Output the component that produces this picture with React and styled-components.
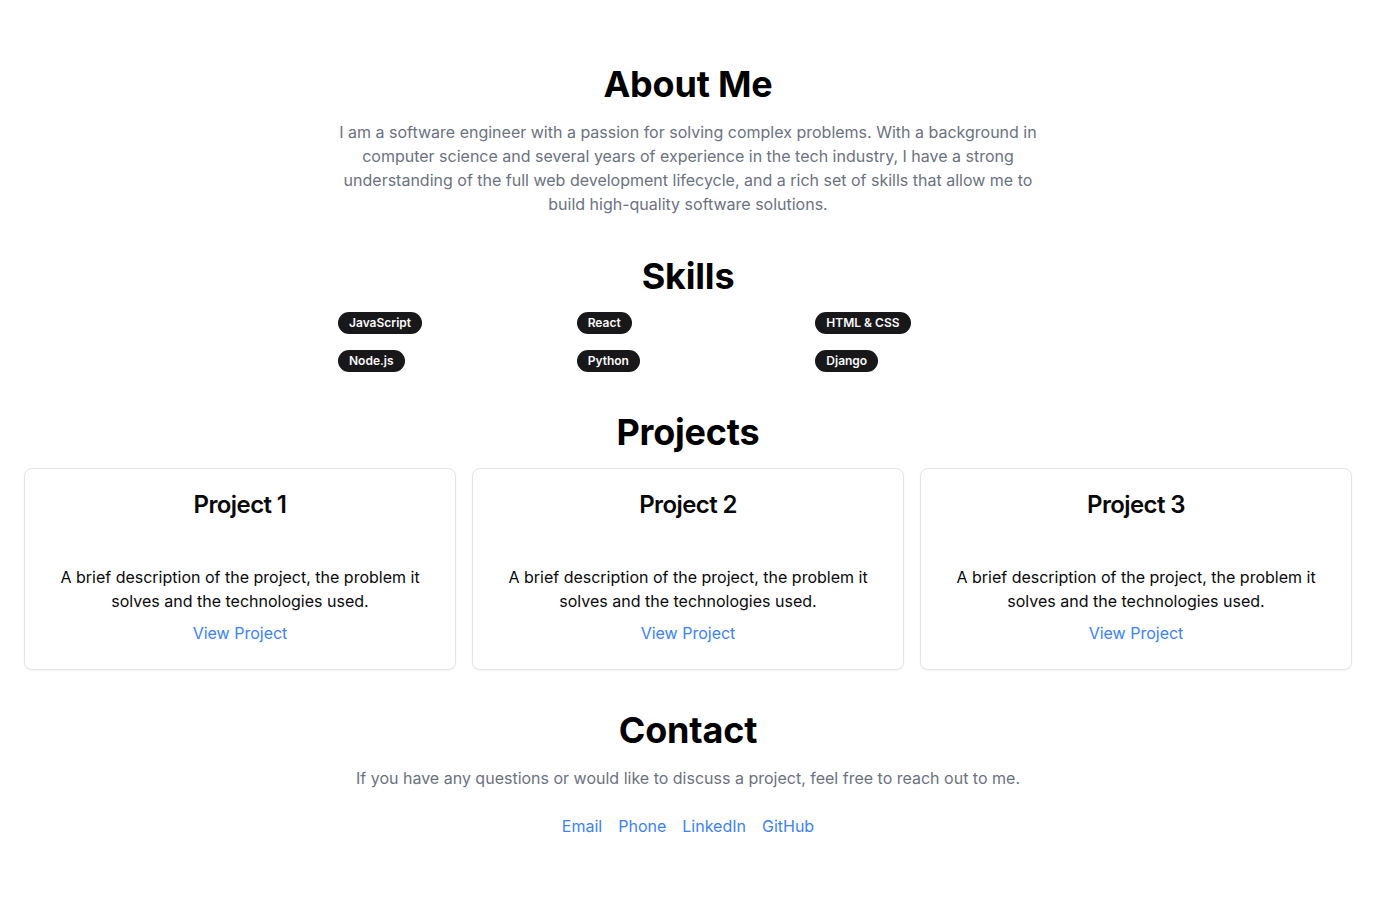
import React from 'react';
import styled, { createGlobalStyle } from 'styled-components';

const GlobalStyle = createGlobalStyle`
  * {
    box-sizing: border-box;
  }

  body {
    margin: 0;
    background: #ffffff;
    color: #09090b;
    font-family: Inter, 'Noto Sans', sans-serif;
    -webkit-font-smoothing: antialiased;
  }

  h1, h2, h3, p {
    margin: 0;
  }
`;

const Page = styled.main`
  display: flex;
  flex-direction: column;
  gap: 40px;
  padding: 64px 24px 64px;
`;

const Section = styled.section`
  display: flex;
  flex-direction: column;
  align-items: center;
  gap: 16px;
  width: 100%;
  max-width: ${({ wide }) => (wide ? 'none' : '700px')};
  margin: 0 auto;
  text-align: center;
`;

const Heading = styled.h2`
  font-size: 36px;
  line-height: 40px;
  font-weight: 700;
  letter-spacing: -0.2px;
  color: #000;
`;

const Lead = styled.p`
  font-size: 16px;
  line-height: 24px;
  color: #6b7280;
`;

const SkillGrid = styled.div`
  display: grid;
  grid-template-columns: repeat(3, 1fr);
  gap: 16px;
  width: 100%;
  justify-items: start;
`;

const Badge = styled.span`
  display: inline-flex;
  align-items: center;
  height: 22px;
  padding: 0 11px;
  border-radius: 999px;
  background: #18181b;
  color: #fafafa;
  font-size: 12px;
  font-weight: 600;
  line-height: 16px;
`;

const CardGrid = styled.div`
  display: grid;
  grid-template-columns: repeat(3, 1fr);
  gap: 16px;
  width: 100%;
`;

const Card = styled.div`
  display: flex;
  flex-direction: column;
  align-items: center;
  padding: 24px;
  border: 1px solid #e4e4e7;
  border-radius: 8px;
  background: #fff;
  box-shadow: 0 1px 2px rgba(0, 0, 0, 0.05);
`;

const CardTitle = styled.h3`
  font-size: 24px;
  line-height: 24px;
  font-weight: 600;
  letter-spacing: -0.6px;
  color: #09090b;
`;

const CardText = styled.p`
  margin-top: 48px;
  font-size: 16px;
  line-height: 24px;
  color: #09090b;
`;

const Link = styled.a`
  color: #3b82f6;
  font-size: 16px;
  line-height: 24px;
  text-decoration: none;
  margin-top: ${({ spaced }) => (spaced ? 8 : 0)}px;
`;

const LinkRow = styled.div`
  display: flex;
  gap: 16px;
  justify-content: center;
  margin-top: 8px;
`;

const skills = ['JavaScript', 'React', 'HTML & CSS', 'Node.js', 'Python', 'Django'];
const projects = ['Project 1', 'Project 2', 'Project 3'];
const contacts = ['Email', 'Phone', 'LinkedIn', 'GitHub'];

const App = () => (
  <>
    <GlobalStyle />
    <Page>
      <Section>
        <Heading>About Me</Heading>
        <Lead>
          I am a software engineer with a passion for solving complex problems. With a background in
          computer science and several years of experience in the tech industry, I have a strong
          understanding of the full web development lifecycle, and a rich set of skills that allow me
          to build high-quality software solutions.
        </Lead>
      </Section>

      <Section>
        <Heading>Skills</Heading>
        <SkillGrid>
          {skills.map((s) => (
            <Badge key={s}>{s}</Badge>
          ))}
        </SkillGrid>
      </Section>

      <Section wide>
        <Heading>Projects</Heading>
        <CardGrid>
          {projects.map((p) => (
            <Card key={p}>
              <CardTitle>{p}</CardTitle>
              <CardText>
                A brief description of the project, the problem it solves and the technologies used.
              </CardText>
              <Link href="#" spaced>
                View Project
              </Link>
            </Card>
          ))}
        </CardGrid>
      </Section>

      <Section>
        <Heading>Contact</Heading>
        <Lead>
          If you have any questions or would like to discuss a project, feel free to reach out to me.
        </Lead>
        <LinkRow>
          {contacts.map((c) => (
            <Link key={c} href="#">
              {c}
            </Link>
          ))}
        </LinkRow>
      </Section>
    </Page>
  </>
);

export default App;
